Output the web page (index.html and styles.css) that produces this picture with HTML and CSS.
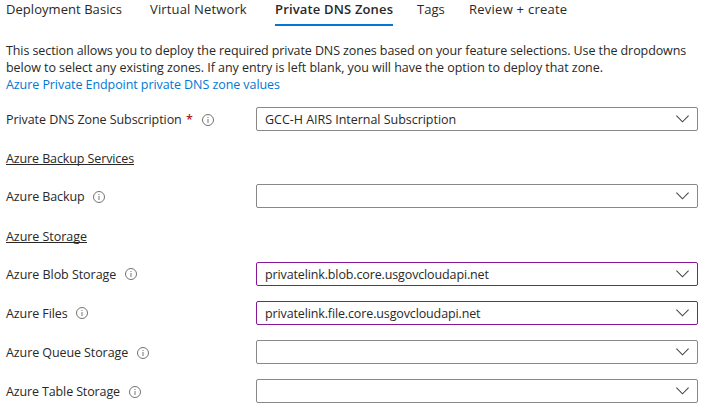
FILE: index.html
```
<!DOCTYPE html>
<html lang="en">
<head>
<meta charset="utf-8">
<title>Private DNS Zones</title>
<link rel="stylesheet" href="styles.css">
</head>
<body>
<svg class="defs" aria-hidden="true">
  <symbol id="info" viewBox="0 0 12 12"><circle cx="6" cy="6" r="5.5" fill="none" stroke="#747270"/><path d="M6 5v4M6 3v1" stroke="#858381" stroke-width="1.1"/></symbol>
  <symbol id="chevron" viewBox="0 0 13 8"><path d="M.4 .7 6.5 6.8 12.6 .7" fill="none" stroke="#484644" stroke-width="1.1"/></symbol>
</svg>
<nav class="tabs">
  <a class="tab basics">Deployment Basics</a>
  <a class="tab network">Virtual Network</a>
  <a class="tab active">Private DNS Zones</a>
  <a class="tab tags">Tags</a>
  <a class="tab review">Review + create</a>
</nav>
<main>
  <p class="intro"><span class="line-one">This section allows you to deploy the required private DNS zones based on your feature selections. Use the dropdowns</span><br><span class="line-two">below to select any existing zones. If any entry is left blank, you will have the option to deploy that zone.</span><br><a class="link">Azure Private Endpoint private DNS zone values</a></p>
  <form class="fields">
    <div class="row"><label class="subscription">Private DNS Zone Subscription</label><span class="required">*</span><svg class="info low"><use href="#info"/></svg><div class="select"><span class="account">GCC-H AIRS Internal Subscription</span><svg class="chevron"><use href="#chevron"/></svg></div></div>
    <h2 class="backup-title"><span>Azure Backup Services</span></h2>
    <div class="row"><label class="backup">Azure Backup</label><svg class="info low"><use href="#info"/></svg><div class="select"><svg class="chevron"><use href="#chevron"/></svg></div></div>
    <h2 class="storage-title"><span>Azure Storage</span></h2>
    <div class="row"><label class="blob">Azure Blob Storage</label><svg class="info"><use href="#info"/></svg><div class="select changed"><span class="zone">privatelink.blob.core.usgovcloudapi.net</span><svg class="chevron"><use href="#chevron"/></svg></div></div>
    <div class="row"><label class="files">Azure Files</label><svg class="info"><use href="#info"/></svg><div class="select changed"><span class="zone">privatelink.file.core.usgovcloudapi.net</span><svg class="chevron"><use href="#chevron"/></svg></div></div>
    <div class="row"><label class="queue">Azure Queue Storage</label><svg class="info low"><use href="#info"/></svg><div class="select"><svg class="chevron"><use href="#chevron"/></svg></div></div>
    <div class="row"><label class="table">Azure Table Storage</label><svg class="info low"><use href="#info"/></svg><div class="select"><svg class="chevron"><use href="#chevron"/></svg></div></div>
  </form>
</main>
</body>
</html>
```
FILE: styles.css
```
* { box-sizing: border-box; }
body { margin: 0; background: #fff; color: #292827; font: 12.5px/17px "Open Sans", "Noto Sans", sans-serif; overflow: hidden; white-space: nowrap; }
.defs { display: none; }
.tabs { display: flex; height: 26px; padding-left: 6px; font-size: 13px; }
.tab { flex: none; height: 26px; padding-top: 1px; }
.basics { width: 116px; margin-right: 28px; letter-spacing: .05px; }
.network { width: 97px; margin-right: 28px; letter-spacing: .15px; }
.active { width: 118px; margin-right: 24px; border-bottom: 2px solid #0078d4; font-weight: 600; letter-spacing: .16px; }
.tags { width: 28px; margin-right: 24px; }
.review { letter-spacing: .25px; }
.intro { margin: 16px 0 14px 6px; }
.line-one { letter-spacing: -.09px; }
.line-two { letter-spacing: -.05px; }
.link { color: #0078d4; letter-spacing: -.07px; }
.fields { padding: 0 12px 0 6px; }
.row { display: flex; align-items: center; height: 24px; margin-bottom: 15px; }
.row label { flex: none; letter-spacing: -.09px; }
.row .subscription { width: 176px; letter-spacing: -.07px; }
.required { width: 8px; margin-left: 4px; color: #a4262c; font-weight: 600; }
.required + .info { margin-left: 8px; }
.backup { width: 78px; }
.row .blob { width: 110px; letter-spacing: -.05px; }
.files { width: 61px; }
.queue { width: 122px; }
.row .table { width: 114px; letter-spacing: -.13px; }
.info { width: 12px; height: 12px; margin-left: 9px; flex: none; }
.low { margin-top: 2px; }
.select { display: flex; align-items: center; width: 442px; height: 24px; margin-left: auto; padding: 0 8px; border: 1px solid #8a8886; border-radius: 2px; }
.changed { border-color: #881798; }
.account { letter-spacing: -.03px; }
.zone { letter-spacing: -.13px; }
.chevron { width: 13px; height: 8px; margin-left: auto; }
h2 { display: flex; height: 24px; margin: 0 0 14px; font-size: inherit; font-weight: 400; letter-spacing: -.11px; }
h2 span { height: 18px; line-height: 24px; border-bottom: 1px solid #292827; }
.backup-title span { height: 19px; line-height: 26px; }
.storage-title { margin-bottom: 15px; padding-top: 2px; letter-spacing: -.05px; }
```
